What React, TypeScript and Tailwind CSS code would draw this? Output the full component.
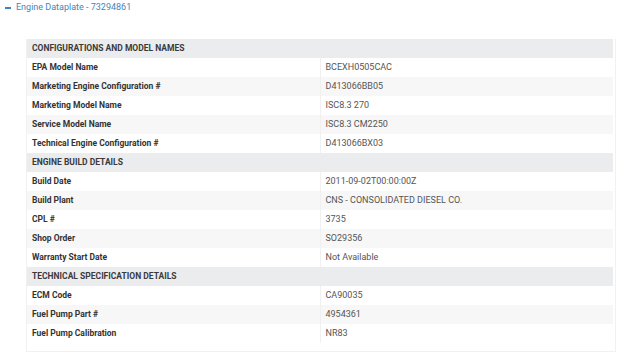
type Row = { label: string; value?: string; section?: boolean }

const rows: Row[] = [
	{ label: 'CONFIGURATIONS AND MODEL NAMES', section: true },
	{ label: 'EPA Model Name', value: 'BCEXH0505CAC' },
	{ label: 'Marketing Engine Configuration #', value: 'D413066BB05' },
	{ label: 'Marketing Model Name', value: 'ISC8.3 270' },
	{ label: 'Service Model Name', value: 'ISC8.3 CM2250' },
	{ label: 'Technical Engine Configuration #', value: 'D413066BX03' },
	{ label: 'ENGINE BUILD DETAILS', section: true },
	{ label: 'Build Date', value: '2011-09-02T00:00:00Z' },
	{ label: 'Build Plant', value: 'CNS - CONSOLIDATED DIESEL CO.' },
	{ label: 'CPL #', value: '3735' },
	{ label: 'Shop Order', value: 'SO29356' },
	{ label: 'Warranty Start Date', value: 'Not Available' },
	{ label: 'TECHNICAL SPECIFICATION DETAILS', section: true },
	{ label: 'ECM Code', value: 'CA90035' },
	{ label: 'Fuel Pump Part #', value: '4954361' },
	{ label: 'Fuel Pump Calibration', value: 'NR83' },
]

export default function App() {
	// stripes restart after every section header
	let stripe = 0

	return (
		<div className="w-[640px] h-[360px] bg-white font-['Roboto',sans-serif] overflow-hidden">
			{/* Toggle header */}
			<div className="flex flex-row items-center gap-[5px] pl-[5px] pt-[2px] h-[14px] text-[9px] text-[#4585bb]">
				<span className="block w-[6px] h-[2px] bg-[#4585bb]" />
				<span>Engine Dataplate - 73294861</span>
			</div>

			<div className="ml-[26px] mr-[24px] mt-[25px] border border-t-0 border-[#f1f1f1] pb-[8px] pr-[2px]">
				<table className="w-full border-collapse leading-none">
					<tbody>
						{rows.map(row => {
							if (row.section) {
								stripe = 0
								return (
									<tr key={row.label} className="h-[19px] bg-[#ebecee]">
										<td colSpan={2} className="px-[5px] text-[8.5px] font-bold text-[#3a3a3a]">
											{row.label}
										</td>
									</tr>
								)
							}
							const odd = stripe++ % 2 === 1
							return (
								<tr key={row.label} className={odd ? 'h-[19px] bg-[#f7f7f7]' : 'h-[19px] bg-white'}>
									<td className="w-1/2 px-[5px] text-[8.5px] font-bold text-[#333]">{row.label}</td>
									<td className="w-1/2 px-[5px] text-[9px] text-[#555] border-l border-[#f0f0f0]">{row.value}</td>
								</tr>
							)
						})}
					</tbody>
				</table>
			</div>
		</div>
	)
}
